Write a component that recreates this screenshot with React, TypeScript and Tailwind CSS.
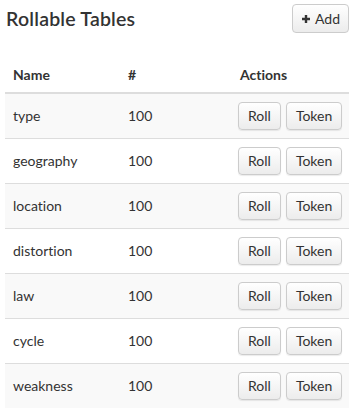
const tables = [
  "type",
  "geography",
  "location",
  "distortion",
  "law",
  "cycle",
  "weakness",
];

function Btn({ children }: { children: React.ReactNode }) {
  return (
    <button
      type="button"
      className="h-[28px] px-[9px] rounded-[4px] border border-[#cccccc] bg-gradient-to-b from-white to-[#ececec] text-[14px] text-[#333] shadow-[0_1px_1px_rgba(0,0,0,0.08)]"
    >
      {children}
    </button>
  );
}

export default function App() {
  return (
    <div
      className="w-[355px] h-[408px] overflow-hidden bg-white text-[#333] [font-variant-ligatures:none]"
      style={{ fontFamily: "Lato, 'Open Sans', sans-serif" }}
    >
      <div className="flex items-center justify-between pl-[6px] pr-[6px] pt-[4px] h-[33px]">
        <h1 className="text-[19.5px] font-semibold tracking-[0.2px]">Rollable Tables</h1>
        <button
          type="button"
          className="flex items-center gap-[4px] h-[29px] w-[57px] justify-center rounded-[4px] border border-[#cccccc] bg-gradient-to-b from-white to-[#ececec] text-[14px] text-[#333]"
        >
          <svg width="10" height="10" viewBox="0 0 10 10">
            <path d="M5 1v8M1 5h8" stroke="#333" strokeWidth="2.4" />
          </svg>
          Add
        </button>
      </div>

      <table className="mt-[23px] ml-[5px] w-[344px] table-fixed border-collapse text-[14px]">
        <colgroup>
          <col className="w-[115px]" />
          <col className="w-[112px]" />
          <col />
        </colgroup>
        <thead>
          <tr className="h-[37px] border-b-2 border-[#dddddd]">
            <th className="pl-[8px] text-left font-bold">Name</th>
            <th className="pl-[8px] text-left font-bold">#</th>
            <th className="pl-[8px] text-left font-bold">Actions</th>
          </tr>
        </thead>
        <tbody>
          {tables.map((t, i) => (
            <tr
              key={t}
              className={
                "h-[45px] border-b border-[#dddddd] " +
                (i % 2 === 0 ? "bg-[#f9f9f9]" : "bg-white")
              }
            >
              <td className="pl-[8px]">{t}</td>
              <td className="pl-[8px]">100</td>
              <td className="pl-[6px]">
                <div className="flex gap-[5px]">
                  <Btn>Roll</Btn>
                  <Btn>Token</Btn>
                </div>
              </td>
            </tr>
          ))}
        </tbody>
      </table>
    </div>
  );
}
